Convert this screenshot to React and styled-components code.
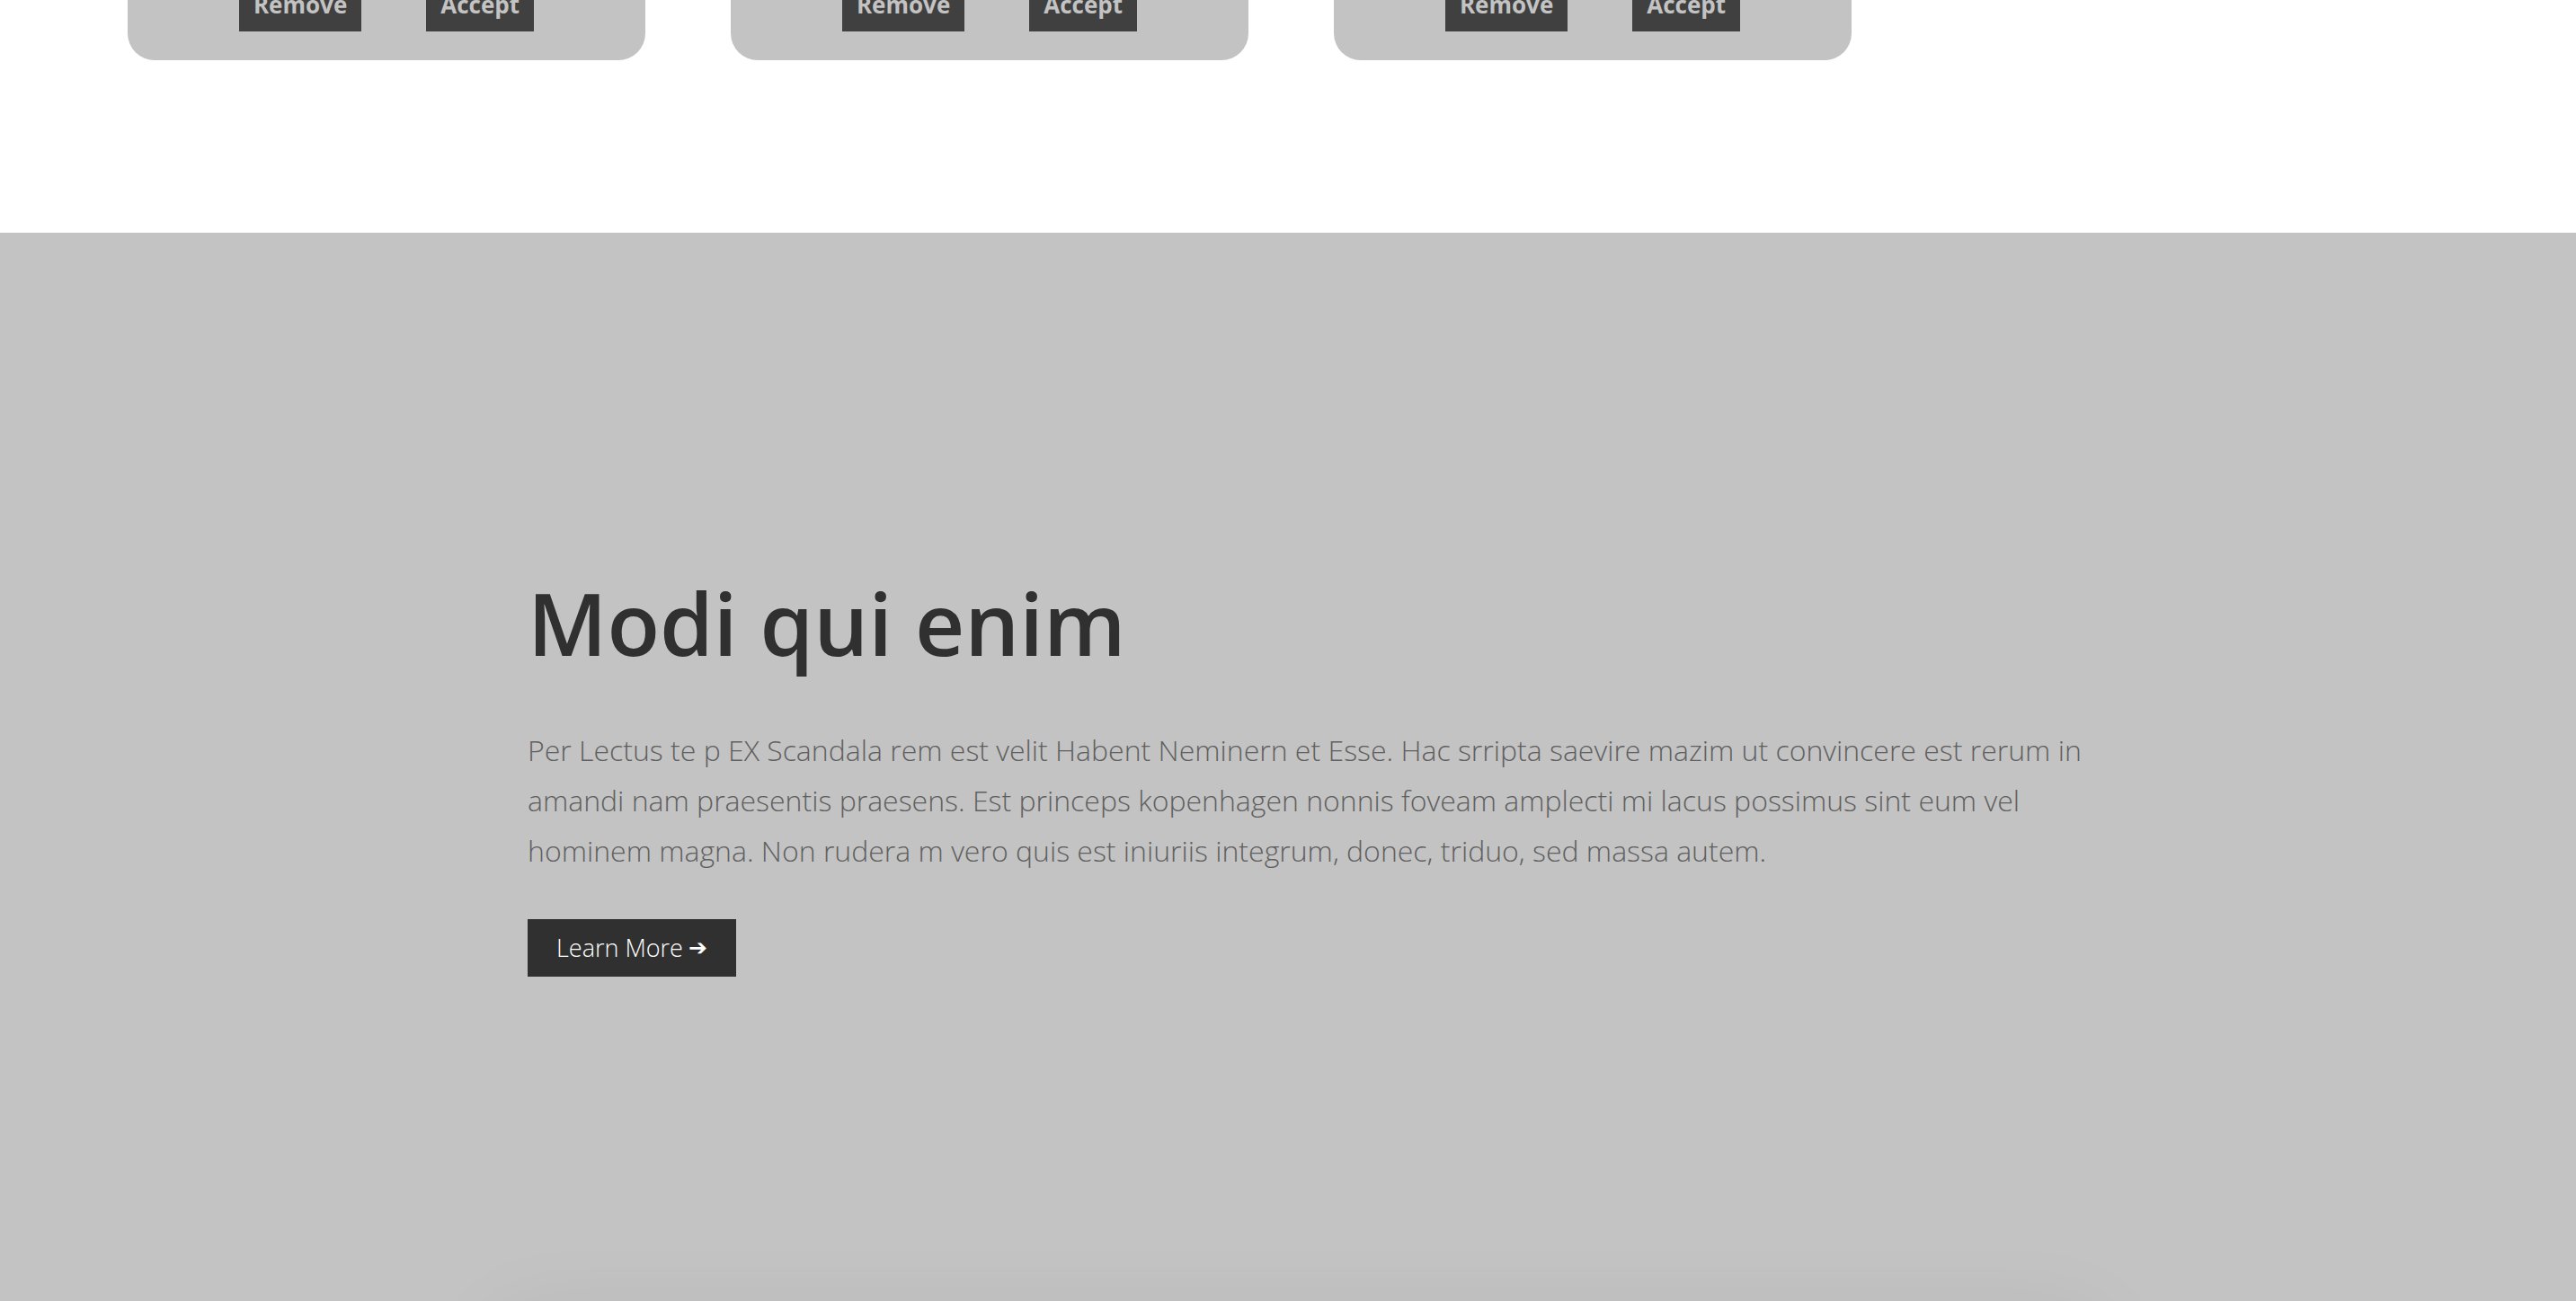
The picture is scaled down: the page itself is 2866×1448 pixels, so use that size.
import React from 'react';
import styled, { createGlobalStyle } from 'styled-components';

const GlobalStyle = createGlobalStyle`
  html, body {
    margin: 0;
    padding: 0;
    background: #ffffff;
    font-family: 'Open Sans', 'Liberation Sans', sans-serif;
  }
`;

const requests = [1, 2, 3];

const App = () => {
    return (
        <Page>
            <GlobalStyle />
            <CardRow>
                {requests.map((id) => (
                    <Card key={id}>
                        <Actions>
                            <ActionButton>Remove</ActionButton>
                            <ActionButton>Accept</ActionButton>
                        </Actions>
                    </Card>
                ))}
            </CardRow>
            <Feature>
                <Content>
                    <Title>Modi qui enim</Title>
                    <Text>
                        Per Lectus te p EX Scandala rem est velit Habent Neminern et Esse. Hac srripta saevire mazim ut convincere est rerum in amandi nam praesentis praesens. Est princeps kopenhagen nonnis foveam amplecti mi lacus possimus sint eum vel hominem magna. Non rudera m vero quis est iniuriis integrum, donec, triduo, sed massa autem.
                    </Text>
                    <LearnMore>
                        Learn More <Arrow>➔</Arrow>
                    </LearnMore>
                </Content>
                <Panel />
            </Feature>
        </Page>
    );
};

const Page = styled.div`
    width: 100%;
    overflow: hidden;
    height: 1448px;
`;

const CardRow = styled.div`
    display: flex;
    gap: 95px;
    margin-top: -63px;
    padding-left: 142px;
`;

const Card = styled.div`
    width: 576px;
    box-sizing: border-box;
    padding: 40px 0 32px;
    background: #c3c3c3;
    border-radius: 0 0 30px 30px;
`;

const Actions = styled.div`
    display: flex;
    justify-content: center;
    gap: 72px;
`;

const ActionButton = styled.button`
    border: none;
    background: #404040;
    color: #c3c3c3;
    font-family: 'Open Sans', 'Liberation Sans', sans-serif;
    font-weight: 700;
    font-size: 26px;
    line-height: 1.4;
    padding: 10px 16px 12px;
    cursor: pointer;
`;

const Feature = styled.section`
    margin-top: 192px;
    background: #c3c3c3;
    padding-top: 376px;
    height: 1400px;
`;

const Content = styled.div`
    width: 1760px;
    margin-left: 587px;
`;

const Title = styled.h2`
    margin: 0 0 56px;
    font-family: 'Open Sans', 'Liberation Sans', sans-serif;
    font-weight: 600;
    font-size: 96px;
    line-height: 1.2;
    color: #303030;
`;

const Text = styled.p`
    margin: 0 0 48px;
    font-family: 'Open Sans', 'Liberation Sans', sans-serif;
    font-weight: 300;
    font-size: 32px;
    line-height: 56px;
    color: #606060;
`;

const LearnMore = styled.a`
    display: inline-flex;
    align-items: center;
    gap: 6px;
    height: 64px;
    box-sizing: border-box;
    padding: 0 32px 0 32px;
    background: #303030;
    color: #ffffff;
    font-family: 'Open Sans', 'Liberation Sans', sans-serif;
    font-weight: 300;
    font-size: 27px;
    text-decoration: none;
    cursor: pointer;
`;

const Arrow = styled.span`
    font-family: 'DejaVu Sans', sans-serif;
    font-weight: 700;
    font-size: 25px;
`;

const Panel = styled.div`
    margin: 390px 0 0 560px;
    width: 1770px;
    height: 400px;
    background: #c3c3c3;
    box-shadow: 0 0 100px rgba(0, 0, 0, 0.08);
`;

export default App;
